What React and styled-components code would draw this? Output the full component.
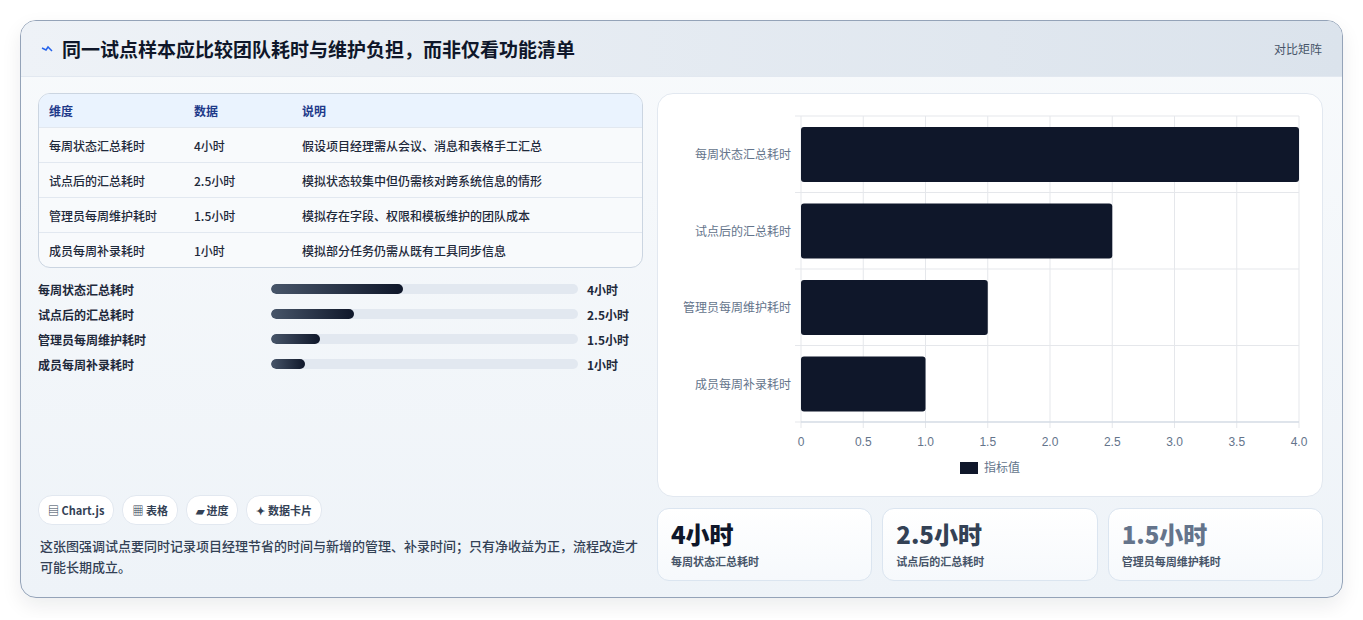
import React from "react";
import styled, { createGlobalStyle } from "styled-components";

const G = createGlobalStyle`
  html,body{margin:0;padding:0;background:#fff;}
  body{font-family:"Noto Sans CJK SC","Noto Sans",sans-serif;color:#0f172a;}
`;
const Page = styled.div`padding:20px 20px 20px 20px;`;
const Card = styled.div`
  border:1px solid #94a3b8;border-radius:16px;overflow:hidden;
  background:linear-gradient(180deg,#f8fafc,#eef3f8);
  box-shadow:0 8px 20px rgba(15,23,42,.08);height:578px;box-sizing:border-box;
  display:flex;flex-direction:column;
`;
const Header = styled.div`
  height:55px;flex:none;display:flex;align-items:center;justify-content:space-between;
  padding:0 20px;background:linear-gradient(90deg,#eef2f7,#dbe3ec);border-bottom:1px solid #e2e8f0;
`;
const Title = styled.h1`margin:0;font-size:19px;font-weight:700;color:#0f172a;display:flex;align-items:center;gap:9px;`;
const Tag = styled.span`font-size:12px;color:#475569;`;
const Body = styled.div`flex:1;display:grid;grid-template-columns:605px 666px;gap:14px;padding:16px 18px 18px 17px;`;
const Left = styled.div`display:flex;flex-direction:column;`;
const Table = styled.div`border:1px solid #cbd5e1;border-radius:12px;overflow:hidden;background:#f8fafc;`;
const Row = styled.div`
  display:grid;grid-template-columns:145px 108px 1fr;padding:0 10px;align-items:center;
  height:${p=>p.$head?33:34}px;font-size:12px;font-weight:${p=>p.$head?700:500};
  color:${p=>p.$head?"#1e3a8a":"#1e293b"};background:${p=>p.$head?"#eaf3fe":"transparent"};
  border-top:${p=>p.$head?"none":"1px solid #e2e8f0"};
`;
const Bars = styled.div`display:flex;flex-direction:column;gap:7px;margin-top:12px;`;
const BarRow = styled.div`display:grid;grid-template-columns:224px 307px 1fr;align-items:center;height:18px;font-size:12px;font-weight:600;color:#1e293b;column-gap:9px;`;
const Track = styled.div`height:10px;border-radius:5px;background:#e2e8f0;overflow:hidden;`;
const Fill = styled.div`height:100%;border-radius:5px;background:linear-gradient(90deg,#475569,#0f172a);`;
const Spacer = styled.div`flex:1;`;
const Chips = styled.div`display:flex;gap:8px;`;
const Chip = styled.span`
  height:28px;padding:0 9px;border-radius:14px;background:#fff;border:1px solid #e2e8f0;
  display:inline-flex;align-items:center;gap:4px;font-size:11px;font-weight:700;color:#334155;
`;
const Para = styled.p`margin:10px 0 4px 2px;font-size:13px;line-height:21px;color:#334155;font-weight:500;`;
const Right = styled.div`display:flex;flex-direction:column;gap:11px;`;
const ChartBox = styled.div`height:404px;background:#fff;border:1px solid #e2e8f0;border-radius:16px;box-sizing:border-box;`;
const Stats = styled.div`display:grid;grid-template-columns:repeat(3,1fr);gap:10px;`;
const Stat = styled.div`
  height:73px;box-sizing:border-box;border:1px solid #dbe5f0;border-radius:12px;
  background:linear-gradient(180deg,#fff,#f6f9fc);padding:9px 13px;
`;
const StatV = styled.div`font-size:24px;font-weight:800;line-height:32px;color:${p=>p.$c};`;
const StatL = styled.div`font-size:11px;font-weight:600;color:#475569;margin-top:3px;`;

const data = [
  ["每周状态汇总耗时", 4, "4小时", "假设项目经理需从会议、消息和表格手工汇总"],
  ["试点后的汇总耗时", 2.5, "2.5小时", "模拟状态较集中但仍需核对跨系统信息的情形"],
  ["管理员每周维护耗时", 1.5, "1.5小时", "模拟存在字段、权限和模板维护的团队成本"],
  ["成员每周补录耗时", 1, "1小时", "模拟部分任务仍需从既有工具同步信息"],
];
const pct = [43, 27, 16, 11];

function Chart() {
  const x0 = 143, w = 498, y0 = 22, h = 306, band = h / 4;
  const ticks = [0, 0.5, 1, 1.5, 2, 2.5, 3, 3.5, 4];
  return (
    <svg width="664" height="402" style={{display:"block"}}>
      {ticks.map((t,i)=>(
        <g key={i}>
          <line x1={x0+t/4*w} x2={x0+t/4*w} y1={y0} y2={y0+h+6} stroke="#e5e7eb"/>
          <text x={x0+t/4*w} y={y0+h+24} textAnchor="middle" fontSize="12" fill="#64748b" fontFamily="Liberation Sans,sans-serif">{t===0?"0":t.toFixed(1)}</text>
        </g>
      ))}
      {[0,1,2,3,4].map(i=><line key={i} x1={x0-6} x2={x0+w} y1={y0+i*band} y2={y0+i*band} stroke="#e5e7eb"/>)}
      <line x1={x0} x2={x0+w} y1={y0+h} y2={y0+h} stroke="#cbd5e1"/>
      {data.map((d,i)=>(
        <g key={i}>
          <rect x={x0} y={y0+i*band+11} width={d[1]/4*w} height={55} rx="3" fill="#0f172a"/>
          <text x={x0-10} y={y0+i*band+band/2+5} textAnchor="end" fontSize="12" fill="#64748b" fontFamily="Noto Sans CJK SC,sans-serif">{d[0]}</text>
        </g>
      ))}
      <rect x="302" y="368" width="18" height="12" fill="#0f172a"/>
      <text x="326" y="378" fontSize="12" fill="#64748b" fontFamily="Noto Sans CJK SC,sans-serif">指标值</text>
    </svg>
  );
}

export default function App() {
  return (
    <Page>
      <G/>
      <Card>
        <Header>
          <Title>
            <svg width="12" height="8" viewBox="0 0 12 8"><path d="M1 3 L5 5 L7 2 L11 6" stroke="#2563eb" strokeWidth="1.5" fill="none"/></svg>
            同一试点样本应比较团队耗时与维护负担，而非仅看功能清单
          </Title>
          <Tag>对比矩阵</Tag>
        </Header>
        <Body>
          <Left>
            <Table>
              <Row $head><span>维度</span><span>数据</span><span>说明</span></Row>
              {data.map(d=><Row key={d[0]}><span>{d[0]}</span><span>{d[2]}</span><span>{d[3]}</span></Row>)}
            </Table>
            <Bars>
              {data.map((d,i)=>(
                <BarRow key={d[0]}><span>{d[0]}</span><Track><Fill style={{width:pct[i]+"%"}}/></Track><span>{d[2]}</span></BarRow>
              ))}
            </Bars>
            <Spacer/>
            <Chips>
              <Chip>▤ Chart.js</Chip><Chip>▦ 表格</Chip><Chip>▰ 进度</Chip><Chip>✦ 数据卡片</Chip>
            </Chips>
            <Para>这张图强调试点要同时记录项目经理节省的时间与新增的管理、补录时间；只有净收益为正，流程改造才可能长期成立。</Para>
          </Left>
          <Right>
            <ChartBox><Chart/></ChartBox>
            <Stats>
              <Stat><StatV $c="#0f172a">4小时</StatV><StatL>每周状态汇总耗时</StatL></Stat>
              <Stat><StatV $c="#334155">2.5小时</StatV><StatL>试点后的汇总耗时</StatL></Stat>
              <Stat><StatV $c="#64748b">1.5小时</StatV><StatL>管理员每周维护耗时</StatL></Stat>
            </Stats>
          </Right>
        </Body>
      </Card>
    </Page>
  );
}
